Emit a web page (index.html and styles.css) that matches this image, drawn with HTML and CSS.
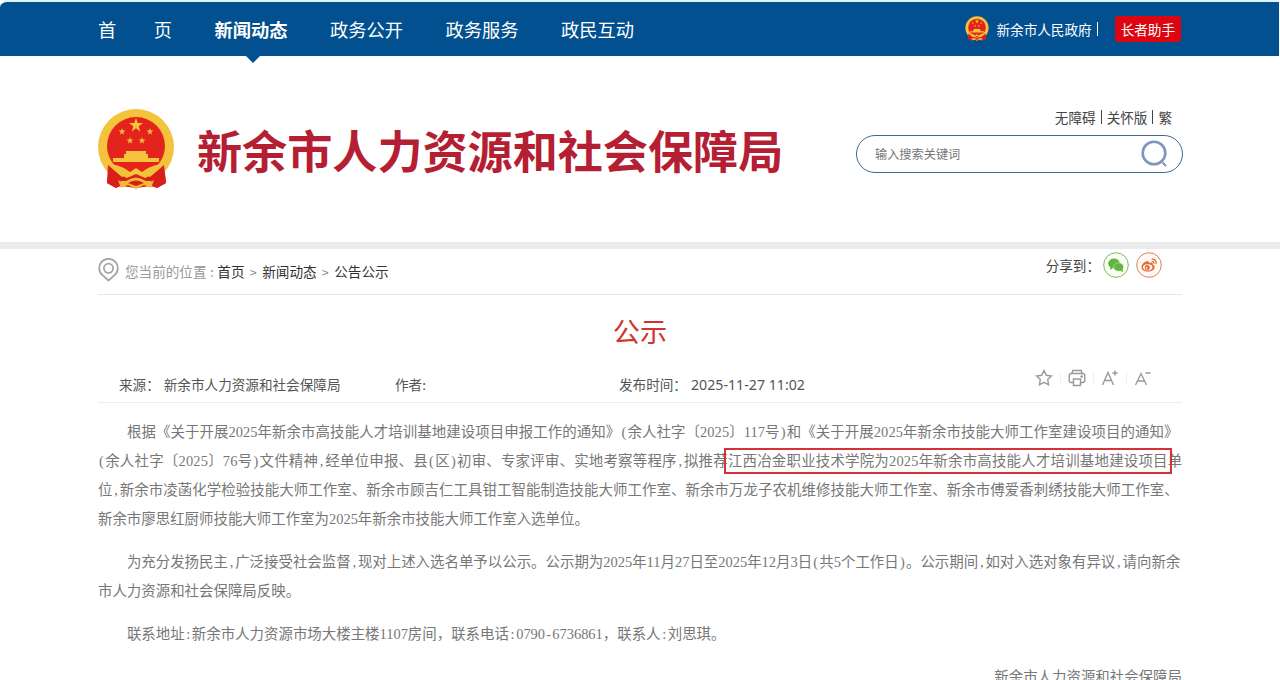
FILE: index.html
```html
<!DOCTYPE html>
<html lang="zh-CN">
  <head>
    <meta charset="UTF-8" />
    <title>公示</title>
    <link rel="stylesheet" href="styles.css">
  </head>
  <body>
    <svg width="0" height="0" class="defs">
      <symbol id="emblem" viewBox="0 0 76 82">
        <path d="M11 57L9 75L18 80L23 78L38 80L53 78L59 80L68 75L66 57Z" fill="#d71f1c" />
        <circle cx="38" cy="39" r="38" fill="#f3c33c" />
        <circle cx="38" cy="38" r="29" fill="#e5231d" />
        <g fill="#f3c33c">
          <path id="star" d="M38 10l1.7 5h5.3l-4.300 3.200 1.600 5.200-4.300-3.200-4.300 3.200 1.600-5.200-4.300-3.200h5.300z" />
          <use href="#star" transform="translate(5 15) scale(.5)" />
          <use href="#star" transform="translate(33 15) scale(.5)" />
          <use href="#star" transform="translate(13 24) scale(.5)" />
          <use href="#star" transform="translate(25 24) scale(.5)" />
          <path d="M28 43h20v3h2v4h11v4H15v-4h11v-4h2z" />
        </g>
        <path d="M10 57L9 75L18 80L23 73H53L59 80L68 75L66 57L52 69L44 63H32L24 69Z" fill="#d71f1c" />
        <path d="M13 56Q25 58 32 64L38 60L44 64Q51 58 63 56Q57 67 47 70L38 66L29 70Q19 67 13 56Z" fill="#f3c33c" />
        <path d="M20 72Q25 76 30 72Q38 67 46 72Q51 76 56 72L53 80L46 77L38 81L30 77L23 80Z" fill="#f3b934" />
        <path d="M30 75Q38 70 46 75L38 78Z" fill="#d71f1c" />
      </symbol>
    </svg>

    <div class="topbar">
      <div class="wrap topbar-inner">
        <nav>
          <a class="home"><span>首</span><span>页</span></a>
          <a class="active">新闻动态</a>
          <a>政务公开</a>
          <a>政务服务</a>
          <a>政民互动</a>
        </nav>
        <div class="gov">
          <svg class="gov-logo"><use href="#emblem" /></svg>
          <span class="gov-name">新余市人民政府</span>
          <span class="bar"></span>
          <a class="elder">长者助手</a>
        </div>
      </div>
    </div>

    <header>
      <div class="wrap header-inner">
        <svg class="logo"><use href="#emblem" /></svg>
        <div class="site-name">新余市人力资源和社会保障局</div>
        <div class="tools">
          <div class="links"><a>无障碍</a><span class="bar"></span><a>关怀版</a><span class="bar"></span><a>繁</a></div>
          <div class="search">
            <span>输入搜索关键词</span>
            <svg width="30" height="30" viewBox="0 0 30 30" fill="none" stroke="#7f95bf">
              <circle cx="14" cy="14" r="11.300" stroke-width="2.600" />
              <path d="M22.500 23.500l3.500 3.500" stroke-width="2" />
            </svg>
          </div>
        </div>
      </div>
    </header>

    <main class="wrap">
      <div class="crumbs">
        <svg class="pin" width="21" height="24" viewBox="0 0 21 24" fill="none" stroke="#a5a5a5" stroke-width="1.800">
          <path d="M10.500 22.500L4.500 17.200A9.300 9.300 0 1 1 16.500 17.200Z" stroke-linejoin="round" />
          <circle cx="10.500" cy="10.300" r="4.600" />
        </svg>
        <span class="path"><span class="here">您当前的位置<b>:</b></span><a>首页</a><em>&gt;</em><a>新闻动态</a><em>&gt;</em><a>公告公示</a></span>
        <div class="share">
          <span>分享到：</span>
          <svg width="26" height="26" viewBox="0 0 26 26">
            <circle cx="13" cy="13" r="12.300" fill="#fbfff6" stroke="#7cb856" />
            <ellipse cx="11" cy="11.500" rx="5.800" ry="4.900" fill="#62b53d" />
            <path d="M7.500 14l-.5 4 3.500-2.500z" fill="#62b53d" />
            <ellipse cx="15.600" cy="15" rx="5" ry="4.200" fill="#62b53d" stroke="#fbfff6" stroke-width=".4" />
            <path d="M17 18.500l3 1.700-.6-3.200z" fill="#62b53d" />
          </svg>
          <svg width="26" height="26" viewBox="0 0 26 26" fill="none">
            <circle cx="13" cy="13" r="12.300" fill="#fffaf4" stroke="#df7f5a" />
            <path d="M11.500 9.200C8.500 9 5.500 12.500 5.500 15.300c0 3 3.200 4.400 6.300 4.400 4.200 0 6.900-2.300 6.900-4.700 0-1.500-1.200-2.200-2-2.500.5-2-1.200-2.500-3.700-1.500.3-1.200 0-1.800-1.500-1.800z" fill="#e8683c" />
            <ellipse cx="11.700" cy="15.300" rx="4.700" ry="3.100" fill="#fffaf4" />
            <circle cx="11.300" cy="15.400" r="2.500" fill="#e8683c" />
            <circle cx="10.700" cy="15.900" r=".8" fill="#fffaf4" />
            <path d="M15.500 7.200c3-.6 5.300 1.600 4.500 4.800M15.800 9.500c1.500-.2 2.400.7 2.100 2.100" stroke="#e8683c" stroke-width="1.300" />
          </svg>
        </div>
      </div>

      <h1>公示</h1>

      <div class="meta">
        <span class="source">来源：<span class="value">新余市人力资源和社会保障局</span></span>
        <span class="author">作者:</span>
        <span class="time">发布时间：<span class="date">2025-11-27 11:02</span></span>
        <div class="icons">
          <svg width="18" height="18" viewBox="0 0 18 18"><path d="M9 1.500l2.300 4.800 5.200.7-3.800 3.600.9 5.200L9 13.300l-4.600 2.500.9-5.200L1.500 7l5.200-.7z" /></svg>
          <i class="sep"></i>
          <svg width="18" height="18" viewBox="0 0 18 18"><path d="M4 4.500L4.800 1.500h8.400l.8 3M5 13.500H3.200Q1.200 13.500 1.200 11.500V6.500Q1.200 4.500 3.200 4.500h11.600q2 0 2 2v5q0 2-2 2H13M5.500 10h7v6.500h-7zM13.700 6.200v2.600M12.400 7.500H15" /></svg>
          <i class="sep"></i>
          <svg width="18" height="18" viewBox="0 0 18 18"><path d="M1.500 16L7 3.500 12.500 16M3.500 11.500h7M11.500 4h5M14 1.500v5" /></svg>
          <i class="sep"></i>
          <svg width="18" height="18" viewBox="0 0 18 18"><path d="M1.500 16L7 4.500 12.500 16M3.500 12h7M11.500 4h5" /></svg>
        </div>
      </div>

      <article>
        <p class="indent"><span class="loose">根据《关于开展2025年新余市高技能人才培训基地建设项目申报工作的通知》<i>(</i>余人社字〔2025〕117号<i>)</i>和《关于开展2025年新余市技能大师工作室建设项目的通知》</span><br>
          <span class="looser"><i>(</i>余人社字〔2025〕76号<i>)</i>文件精神<i>,</i>经单位申报、县<i>(</i>区<i>)</i>初审、专家评审、实地考察等程序<i>,</i>拟推荐<span class="mark">江西冶金职业技术学院为2025年新余市高技能人才培训基地建设项目</span>单</span><br>
          <span class="loose">位<i>,</i>新余市凌菡化学检验技能大师工作室、新余市顾吉仁工具钳工智能制造技能大师工作室、新余市万龙子农机维修技能大师工作室、新余市傅爱香刺绣技能大师工作室、</span><br>
          新余市廖思红厨师技能大师工作室为2025年新余市技能大师工作室入选单位。</p>
        <p class="indent">为充分发扬民主<i>,</i>广泛接受社会监督<i>,</i>现对上述入选名单予以公示。公示期为2025年11月27日至2025年12月3日<i>(</i>共5个工作日<i>)</i>。公示期间<i>,</i>如对入选对象有异议<i>,</i>请向新余<br>
          市人力资源和社会保障局反映。</p>
        <p class="indent">联系地址<i>:</i>新余市人力资源市场大楼主楼1107房间，联系电话<i>:</i>0790<i>-</i>6736861，联系人<i>:</i>刘思琪。</p>
        <p class="sign">新余市人力资源和社会保障局</p>
      </article>
    </main>
  </body>
</html>
```
FILE: styles.css
```css
body {
  margin: 0;
  height: 680px;
  overflow: hidden;
  background: #fff;
  color: #444;
  font-family: "Noto Sans CJK SC", sans-serif;
  font-size: 13.6px;
  line-height: 20px;
}
.defs {
  display: block;
}
.wrap {
  width: 1084px;
  margin-left: 98px;
}
.bar {
  width: 1px;
  height: 14px;
  background: currentColor;
}

/* top navigation */
.topbar {
  height: 54px;
  margin-right: 1px;
  border-top: 2px solid #e3f2f9;
  background: #02508f;
  background-clip: padding-box;
  border-top-left-radius: 7px;
  color: #fff;
}
.topbar-inner {
  display: flex;
  justify-content: space-between;
  height: 54px;
}
nav {
  display: flex;
  gap: 42.500px;
}
nav a {
  position: relative;
  width: 73px;
  font-size: 18.250px;
  line-height: 54px;
  white-space: nowrap;
}
nav .home {
  display: flex;
  justify-content: space-between;
  width: 74px;
}
.active {
  font-weight: bold;
}
.active::after {
  content: "";
  position: absolute;
  left: 30px;
  top: 53px;
  border: 8px solid transparent;
  border-top-color: #02508f;
}
.gov {
  display: flex;
  align-items: center;
  height: 53px;
  margin-right: 1px;
}
.gov-logo {
  width: 24px;
  height: 25px;
  margin-right: 7px;
}
.gov-name {
  margin-right: 5px;
}
.elder {
  margin-left: 17px;
  padding: 3px 6px;
  border-radius: 3px;
  background: #dc0510;
}

/* site header */
header {
  height: 186px;
  border-bottom: 7px solid #ebebeb;
}
.header-inner {
  display: flex;
}
.logo {
  width: 76px;
  height: 82px;
  margin-top: 52px;
}
.site-name {
  margin: 59px 0 0 23px;
  color: #b51f33;
  font-size: 45.100px;
  font-weight: bold;
  line-height: 70px;
  white-space: nowrap;
}
.tools {
  width: 327px;
  margin: 51px -1px 0 auto;
}
.links {
  display: flex;
  align-items: center;
  justify-content: flex-end;
  gap: 5px;
  margin-right: 11px;
}
.search {
  display: flex;
  align-items: center;
  justify-content: space-between;
  height: 36px;
  margin-top: 8px;
  padding: 0 12px 0 18px;
  border: 1px solid #3e6a94;
  border-radius: 19px;
  color: #757575;
  font-size: 12.200px;
}

/* breadcrumbs */
.crumbs {
  display: flex;
  height: 45px;
  border-bottom: 1px solid #e6e6e6;
}
.pin {
  margin-top: 9px;
}
.path {
  margin: 12px 0 0 6px;
  color: #333;
}
.path em {
  margin: 0 5.500px;
  color: #888;
  font-style: normal;
  font-size: 12px;
}
.here {
  color: #999;
}
.here b {
  margin: 0 3.500px;
  font-weight: normal;
}
.share {
  display: flex;
  gap: 7px;
  margin: 3px 20px 0 auto;
}
.share span {
  margin: 3px -4px 0 0;
}

h1 {
  margin: 15px 0 0;
  color: #d0342c;
  font-size: 27.200px;
  font-weight: normal;
  line-height: 40px;
  text-align: center;
}
.meta {
  display: flex;
  height: 52px;
  border-bottom: 1px solid #ececec;
  color: #555;
}
.meta > span {
  margin-top: 24px;
}
.meta .source {
  width: 276px;
  margin-left: 21px;
}
.value {
  margin-left: 4px;
}
.author {
  width: 224px;
}
.date {
  margin-left: 4px;
  font-family: "Noto Sans", sans-serif;
  font-size: 14.200px;
}
.icons {
  display: flex;
  margin: 19px 30px 0 auto;
}
.icons svg {
  fill: none;
  stroke: #999;
  stroke-width: 1.400;
}
.sep {
  width: 1px;
  height: 12px;
  margin: 3px 7px;
  background: #f0f0f0;
}

/* notice text, latin characters take half of a full-width cell */
article {
  padding-top: 15px;
  color: #777;
  font-family: "Liberation Serif", "Noto Sans CJK SC", serif;
  font-size: 14.440px;
  line-height: 29px;
  white-space: nowrap;
}
article p {
  margin: 0 0 14px;
}
article i {
  display: inline-block;
  width: .5em;
  font-style: normal;
  text-align: center;
}
.indent {
  text-indent: 2em;
}
.indent i {
  text-indent: 0;
}
.loose {
  letter-spacing: .07px;
}
.looser {
  letter-spacing: .21px;
}
.mark {
  outline: 2px solid #d6303a;
  outline-offset: 3px;
  /* keeps the frame close to the first character */
  outline-offset: 2.500px;
  padding: 1px 0;
}
.sign {
  text-align: right;
}
```
